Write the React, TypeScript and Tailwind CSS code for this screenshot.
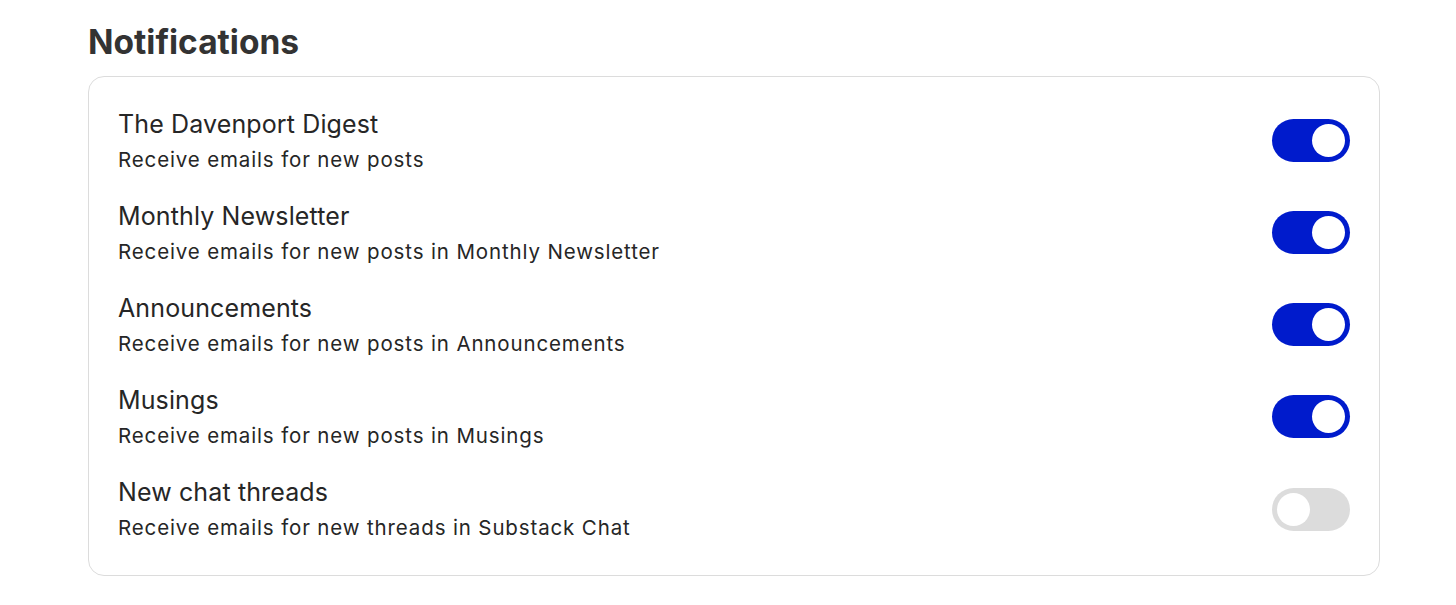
import React, { useState } from 'react';

const items = [
  { title: 'The Davenport Digest', desc: 'Receive emails for new posts', on: true },
  { title: 'Monthly Newsletter', desc: 'Receive emails for new posts in Monthly Newsletter', on: true },
  { title: 'Announcements', desc: 'Receive emails for new posts in Announcements', on: true },
  { title: 'Musings', desc: 'Receive emails for new posts in Musings', on: true },
  { title: 'New chat threads', desc: 'Receive emails for new threads in Substack Chat', on: false },
];

const Toggle: React.FC<{ on: boolean; onClick: () => void }> = ({ on, onClick }) => (
  <button
    type="button"
    onClick={onClick}
    className={
      on
        ? 'mb-[3px] flex h-[43px] w-[78px] shrink-0 items-center justify-end rounded-full bg-[#001bcc] px-[5px]'
        : 'mb-[1px] flex h-[43px] w-[78px] shrink-0 items-center justify-start rounded-full bg-[#dcdcdc] px-[5px]'
    }
  >
    <span className="block h-[33px] w-[33px] rounded-full bg-white" />
  </button>
);

const App: React.FC = () => {
  const [state, setState] = useState(items.map(i => i.on));

  return (
    <div className="min-h-screen bg-white pt-[22px] pl-[88px] pr-[76px] font-['Inter',sans-serif] text-[#262626]">
      <h1 className="mb-[14px] text-[33.5px] font-bold leading-[40px] text-[#333]">Notifications</h1>

      <div className="flex flex-col gap-[20px] rounded-[16px] border border-[#dcdcdc] px-[29px] py-[29px]">
        {items.map((item, i) => (
          <div key={item.title} className="flex items-center justify-between">
            <div>
              <div className="text-[25px] leading-[36px] tracking-[0.005em]">{item.title}</div>
              <div className="text-[20.5px] leading-[36px] tracking-[0.042em]">{item.desc}</div>
            </div>
            <Toggle
              on={state[i]}
              onClick={() => setState(prev => prev.map((v, j) => (j === i ? !v : v)))}
            />
          </div>
        ))}
      </div>
    </div>
  );
};

export default App;
